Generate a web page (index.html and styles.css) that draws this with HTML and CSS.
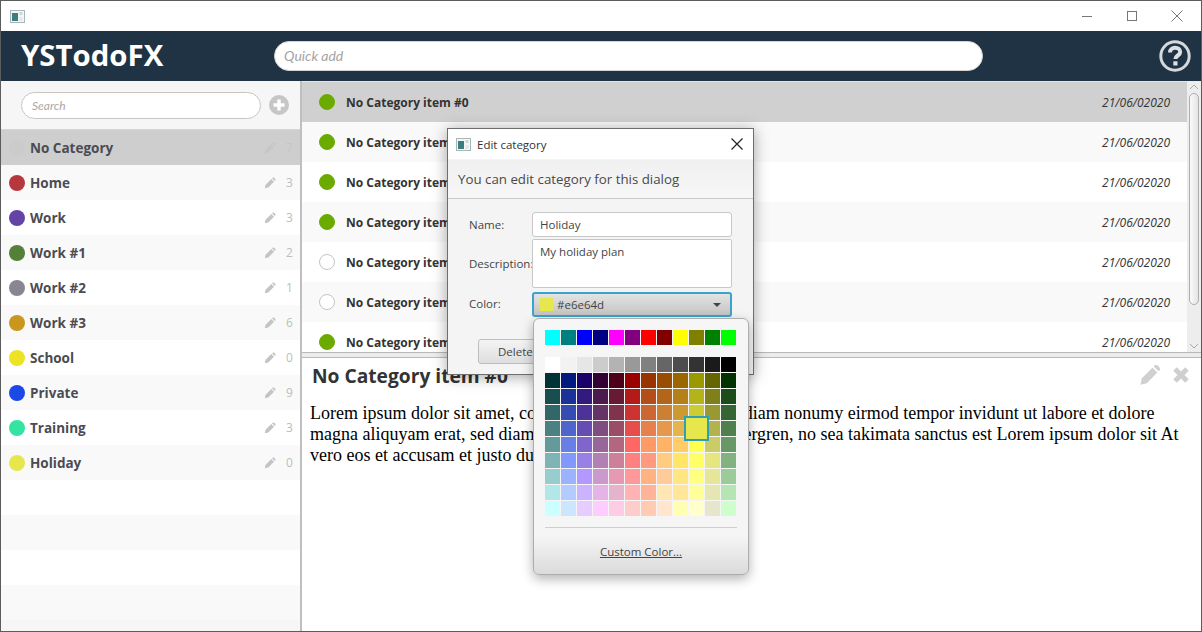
FILE: index.html
```html
<!DOCTYPE html>
<html lang="en">
<head>
<meta charset="utf-8">
<title>YSTodoFX</title>
<link rel="stylesheet" href="styles.css">
</head>
<body>
<svg class="defs" width="0" height="0" aria-hidden="true">
  <symbol id="pencil" viewBox="0 0 24 24"><path d="M1.5 22.5l1.6-7L14.6 4l5.4 5.4L8.5 20.9zM16 2.600l1-1a2.400 2.400 0 0 1 3.300 0l2.100 2.100a2.400 2.400 0 0 1 0 3.300l-1 1z"/></symbol>
  <symbol id="winicon" viewBox="0 0 15 13"><rect x=".5" y=".5" width="14" height="12" fill="#f4f6f6" stroke="#a9b6b6"/><rect x="2" y="3" width="6" height="8" fill="#3c7f80"/><rect x="9.500" y="2" width="3" height="3" fill="#cfd6d6"/><rect x="9.500" y="7" width="3" height="4" fill="#e3e7e7"/></symbol>
</svg>
<div class="window">
  <div class="titlebar">
    <svg class="winicon"><use href="#winicon"/></svg>
    <div class="winctrls">
      <svg width="14" height="14" viewBox="0 0 14 14"><path d="M2 7.500h10" stroke="#777" fill="none"/></svg>
      <svg width="14" height="14" viewBox="0 0 14 14"><rect x="2.500" y="2.500" width="9" height="9" stroke="#777" fill="none"/></svg>
      <svg width="14" height="14" viewBox="0 0 14 14"><path d="M1.500 1.500l11 11M12.500 1.500l-11 11" stroke="#777" fill="none"/></svg>
    </div>
  </div>
  <header class="appbar">
    <h1 class="brand">YSTodoFX</h1>
    <div class="quickadd">Quick add</div>
    <svg class="help" width="34" height="34" viewBox="0 0 34 34"><circle cx="17" cy="17" r="14.200" fill="none" stroke="#d6d9dc" stroke-width="3"/><path d="M12 13.400c0-3 2.300-4.700 5.100-4.700s5.100 1.700 5.100 4.300c0 3.600-4.800 3.400-4.800 7" fill="none" stroke="#dde0e2" stroke-width="4"/><rect x="15.300" y="22.300" width="4.200" height="4.200" fill="#dde0e2"/></svg>
  </header>
  <main class="main">
    <aside class="sidebar">
      <div class="searchrow">
        <div class="search">Search</div>
        <svg class="addbtn" width="20" height="20" viewBox="0 0 20 20"><circle cx="10" cy="10" r="10" fill="#c6c6c6"/><path d="M10 4.500v11M4.500 10h11" stroke="#fff" stroke-width="3.400"/></svg>
      </div>
      <ul class="cats">
        <li class="cat selected"><i class="dot dot-none"></i><span class="catname">No Category</span><svg class="catedit"><use href="#pencil"/></svg><span class="count">7</span></li>
        <li class="cat"><i class="dot dot-home"></i><span class="catname">Home</span><svg class="catedit"><use href="#pencil"/></svg><span class="count">3</span></li>
        <li class="cat"><i class="dot dot-work"></i><span class="catname">Work</span><svg class="catedit"><use href="#pencil"/></svg><span class="count">3</span></li>
        <li class="cat"><i class="dot dot-work1"></i><span class="catname">Work #1</span><svg class="catedit"><use href="#pencil"/></svg><span class="count">2</span></li>
        <li class="cat"><i class="dot dot-work2"></i><span class="catname">Work #2</span><svg class="catedit"><use href="#pencil"/></svg><span class="count">1</span></li>
        <li class="cat"><i class="dot dot-work3"></i><span class="catname">Work #3</span><svg class="catedit"><use href="#pencil"/></svg><span class="count">6</span></li>
        <li class="cat"><i class="dot dot-school"></i><span class="catname">School</span><svg class="catedit"><use href="#pencil"/></svg><span class="count">0</span></li>
        <li class="cat"><i class="dot dot-private"></i><span class="catname">Private</span><svg class="catedit"><use href="#pencil"/></svg><span class="count">9</span></li>
        <li class="cat"><i class="dot dot-training"></i><span class="catname">Training</span><svg class="catedit"><use href="#pencil"/></svg><span class="count">3</span></li>
        <li class="cat"><i class="dot dot-holiday"></i><span class="catname">Holiday</span><svg class="catedit"><use href="#pencil"/></svg><span class="count">0</span></li>
        <li class="cat"></li><li class="cat"></li><li class="cat"></li><li class="cat"></li>
      </ul>
    </aside>
    <section class="content">
      <div class="listpane">
        <ul class="items">
          <li class="item selected"><i class="check done"></i><span class="itemname">No Category item #0</span><span class="date">21/06/02020</span></li>
          <li class="item"><i class="check done"></i><span class="itemname">No Category item #1</span><span class="date">21/06/02020</span></li>
          <li class="item"><i class="check done"></i><span class="itemname">No Category item #2</span><span class="date">21/06/02020</span></li>
          <li class="item"><i class="check done"></i><span class="itemname">No Category item #3</span><span class="date">21/06/02020</span></li>
          <li class="item"><i class="check"></i><span class="itemname">No Category item #4</span><span class="date">21/06/02020</span></li>
          <li class="item"><i class="check"></i><span class="itemname">No Category item #5</span><span class="date">21/06/02020</span></li>
          <li class="item"><i class="check done"></i><span class="itemname">No Category item #6</span><span class="date">21/06/02020</span></li>
        </ul>
        <div class="scrollbar">
          <svg class="arrow" width="14" height="12" viewBox="0 0 14 12"><path d="M3 8l4-4 4 4" fill="none" stroke="#a8a8a8"/></svg>
          <div class="thumbtrack"><div class="thumb"></div></div>
          <svg class="arrow" width="14" height="12" viewBox="0 0 14 12"><path d="M3 4l4 4 4-4" fill="none" stroke="#a8a8a8"/></svg>
        </div>
      </div>
      <div class="splitter"></div>
      <article class="details">
        <div class="dethead">
          <h2 class="dettitle">No Category item #0</h2>
          <svg class="detedit"><use href="#pencil"/></svg>
          <svg class="detclose" width="18" height="18" viewBox="0 0 18 18"><path d="M3 3l12 12M15 3L3 15" stroke="#cfcfcf" stroke-width="5"/></svg>
        </div>
        <p class="detbody">Lorem ipsum dolor sit amet, consetetur sadipscing elitr, sed diam nonumy eirmod tempor invidunt ut labore et dolore magna aliquyam erat, sed diam voluptua. Stet clita kasd gubergren, no sea takimata sanctus est Lorem ipsum dolor sit At vero eos et accusam et justo duo dolores et ea rebum.</p>
      </article>
    </section>
  </main>
</div>

<div class="dialog">
  <div class="dlgtitle">
    <svg class="winicon"><use href="#winicon"/></svg>
    <span class="dlgcaption">Edit category</span>
    <svg class="dlgclose" width="14" height="14" viewBox="0 0 14 14"><path d="M1.500 1.500l11 11M12.500 1.500l-11 11" stroke="#222" fill="none" stroke-width="1.200"/></svg>
  </div>
  <div class="dlghead">You can edit category for this dialog</div>
  <div class="form">
    <label class="flabel">Name:</label>
    <div class="finput">Holiday</div>
    <label class="flabel">Description:</label>
    <div class="farea">My holiday plan</div>
    <label class="flabel">Color:</label>
    <div class="fcombo"><i class="swatchmini"></i><span class="combotext">#e6e64d</span><i class="caret"></i></div>
  </div>
  <div class="dlgbtns"><button class="btn">Delete</button></div>
</div>

<div class="palette">
  <div class="pgrid">
    <span style="background:#00ffff"></span><span style="background:#008080"></span><span style="background:#0000ff"></span><span style="background:#000080"></span><span style="background:#ff00ff"></span><span style="background:#800080"></span><span style="background:#ff0000"></span><span style="background:#800000"></span><span style="background:#ffff00"></span><span style="background:#808000"></span><span style="background:#008000"></span><span style="background:#00ff00"></span>
  </div>
  <div class="pgrid pgrid-main">
    <span style="background:#ffffff"></span><span style="background:#f2f2f2"></span><span style="background:#e6e6e6"></span><span style="background:#cccccc"></span><span style="background:#b3b3b3"></span><span style="background:#999999"></span><span style="background:#808080"></span><span style="background:#666666"></span><span style="background:#4d4d4d"></span><span style="background:#333333"></span><span style="background:#1a1a1a"></span><span style="background:#000000"></span>
    <span style="background:#003333"></span><span style="background:#001a80"></span><span style="background:#1a0068"></span><span style="background:#330033"></span><span style="background:#4d001a"></span><span style="background:#990000"></span><span style="background:#993300"></span><span style="background:#994d00"></span><span style="background:#996600"></span><span style="background:#999900"></span><span style="background:#666600"></span><span style="background:#003300"></span>
    <span style="background:#1a4d4d"></span><span style="background:#1a3399"></span><span style="background:#331a80"></span><span style="background:#4d1a4d"></span><span style="background:#661a33"></span><span style="background:#b31a1a"></span><span style="background:#b34d1a"></span><span style="background:#b3661a"></span><span style="background:#b3801a"></span><span style="background:#b3b31a"></span><span style="background:#80801a"></span><span style="background:#1a4d1a"></span>
    <span style="background:#336666"></span><span style="background:#334db3"></span><span style="background:#4d3399"></span><span style="background:#663366"></span><span style="background:#80334d"></span><span style="background:#cc3333"></span><span style="background:#cc6633"></span><span style="background:#cc8033"></span><span style="background:#cc9933"></span><span style="background:#cccc33"></span><span style="background:#999933"></span><span style="background:#336633"></span>
    <span style="background:#4d8080"></span><span style="background:#4d66cc"></span><span style="background:#664db3"></span><span style="background:#804d80"></span><span style="background:#994d66"></span><span style="background:#e64d4d"></span><span style="background:#e6804d"></span><span style="background:#e6994d"></span><span style="background:#e6b34d"></span><span class="picked" style="background:#e6e64d"></span><span style="background:#b3b34d"></span><span style="background:#4d804d"></span>
    <span style="background:#669999"></span><span style="background:#6680e6"></span><span style="background:#8066cc"></span><span style="background:#996699"></span><span style="background:#b36680"></span><span style="background:#ff6666"></span><span style="background:#ff9966"></span><span style="background:#ffb366"></span><span style="background:#ffcc66"></span><span style="background:#ffff4d"></span><span style="background:#cccc66"></span><span style="background:#669966"></span>
    <span style="background:#80b3b3"></span><span style="background:#8099ff"></span><span style="background:#9980e6"></span><span style="background:#b380b3"></span><span style="background:#cc8099"></span><span style="background:#ff8080"></span><span style="background:#ff9980"></span><span style="background:#ffcc80"></span><span style="background:#ffe666"></span><span style="background:#ffff66"></span><span style="background:#e6e680"></span><span style="background:#80b380"></span>
    <span style="background:#99cccc"></span><span style="background:#99b3ff"></span><span style="background:#b399ff"></span><span style="background:#cc99cc"></span><span style="background:#e699b3"></span><span style="background:#ff9999"></span><span style="background:#ffb380"></span><span style="background:#ffcc99"></span><span style="background:#ffe680"></span><span style="background:#ffff80"></span><span style="background:#e6e699"></span><span style="background:#99cc99"></span>
    <span style="background:#b3e6e6"></span><span style="background:#b3ccff"></span><span style="background:#ccb3ff"></span><span style="background:#e6b3e6"></span><span style="background:#e6b3cc"></span><span style="background:#ffb3b3"></span><span style="background:#ffb399"></span><span style="background:#ffe6b3"></span><span style="background:#ffe699"></span><span style="background:#ffff99"></span><span style="background:#e6e6b3"></span><span style="background:#b3e6b3"></span>
    <span style="background:#ccffff"></span><span style="background:#cce6ff"></span><span style="background:#e6ccff"></span><span style="background:#ffccff"></span><span style="background:#ffcce6"></span><span style="background:#ffcccc"></span><span style="background:#ffccb3"></span><span style="background:#ffe6cc"></span><span style="background:#ffffb3"></span><span style="background:#ffffcc"></span><span style="background:#e6e6cc"></span><span style="background:#ccffcc"></span>
  </div>
  <div class="psep"></div>
  <div class="custom">Custom Color...</div>
</div>
</body>
</html>
```
FILE: styles.css
```css
* { box-sizing: border-box; }
html, body { margin: 0; padding: 0; height: 100%; overflow: hidden; background: #fff; }
body { font-family: "Open Sans", "Noto Sans", sans-serif; color: #333; }
ul { list-style: none; margin: 0; padding: 0; }
.defs { position: absolute; }

.window { width: 1202px; height: 632px; border: 1px solid #5c5c5c; display: flex; flex-direction: column; }

.titlebar { height: 30px; flex: none; background: #fff; display: flex; align-items: center; justify-content: space-between; padding: 0 17px 0 9px; }
.winicon { width: 15px; height: 13px; display: block; flex: none; }
.winctrls { display: flex; gap: 31px; }
.winctrls svg { display: block; }

.appbar { height: 50px; flex: none; background: #1f3344; display: flex; align-items: center; padding: 0 9px 0 20px; }
.brand { margin: 0; width: 253px; flex: none; font-size: 29.4px; font-weight: 700; color: #fff; line-height: 1; }
.quickadd { width: 709px; height: 30px; border-radius: 15px; background: #fff; border: 1px solid #d2d2d2; padding-left: 9px; font-size: 14px; font-style: italic; line-height: 28px; color: #a3a3a3; font-family: "Lato", sans-serif; }
.help { margin-left: auto; display: block; }

.main { flex: 1; min-height: 0; display: flex; }

.sidebar { width: 301px; flex: none; background: #f6f6f6; border-right: 2px solid #bfbfbf; overflow: hidden; }
.searchrow { height: 49px; display: flex; align-items: center; padding: 0 11px 0 20px; gap: 8px; border-bottom: 1px solid #d6d6d6; }
.search { width: 240px; height: 27px; border-radius: 14px; border: 1px solid #c9c6c2; background: #fff; padding-left: 10px; font-family: "Lato", sans-serif; font-size: 12px; font-style: italic; line-height: 25px; color: #a8a8a8; }
.addbtn { display: block; flex: none; }
.cats { background: #fff; }
.cat { height: 35px; display: flex; align-items: center; padding: 0 5px 0 8px; background: #fff; }
.cat:nth-child(even) { background: #f9f9f9; }
.cat.selected { background: #cecece; }
.dot { width: 16px; height: 16px; border-radius: 50%; flex: none; margin-right: 5px; }
.dot-none { background: #cbcbcb; }
.dot-home { background: #b7383c; }
.dot-work { background: #6344a6; }
.dot-work1 { background: #55803a; }
.dot-work2 { background: #8a8592; }
.dot-work3 { background: #c9961e; }
.dot-school { background: #ece324; }
.dot-private { background: #1a49e8; }
.dot-training { background: #35e3a3; }
.dot-holiday { background: #e6e64d; }
.catname { flex: 1; font-size: 13.5px; font-weight: 700; color: #4b4b52; }
.catedit { width: 12px; height: 12px; fill: #c4c4c4; margin-right: 8px; flex: none; }
.count { width: 11px; font-size: 12px; color: #bdbdbd; text-align: center; flex: none; }
.selected .catedit { fill: #c6c6c6; }
.selected .count { color: #c6c6c6; }

.content { flex: 1; min-width: 0; display: flex; flex-direction: column; }
.listpane { height: 271px; flex: none; display: flex; background: #fff; overflow: hidden; }
.items { flex: 1; min-width: 0; padding-top: 1px; background: #e4e4e4; }
.item { height: 40px; display: flex; align-items: center; padding: 0 17px 0 17px; background: #fff; }
.item:nth-child(even) { background: #f9f9f9; }
.item.selected { background: #d0d0d0; }
.check { width: 16px; height: 16px; border-radius: 50%; flex: none; margin-right: 11px; background: #fff; border: 1px solid #c4c4c4; }
.check.done { background: #6bab00; border-color: #6bab00; }
.itemname { flex: 1; font-size: 12px; font-weight: 700; color: #333; }
.date { font-size: 12px; font-style: italic; color: #333; }

.scrollbar { width: 14px; flex: none; background: #ededed; display: flex; flex-direction: column; }
.arrow { display: block; flex: none; }
.thumbtrack { flex: 1; min-height: 0; padding: 0 2px; }
.thumb { height: 212px; border: 1px solid #aeaeae; border-radius: 5px; background: linear-gradient(90deg, #fafafa, #e4e4e4); }

.splitter { height: 6px; flex: none; background: #ececec; border-top: 1px solid #b9b9b9; border-bottom: 1px solid #b9b9b9; }

.details { flex: 1; min-height: 0; background: #fff; padding: 3px 11px 0 8px; overflow: hidden; }
.dethead { display: flex; align-items: center; height: 28px; padding-left: 2px; }
.dettitle { margin: 0; flex: 1; padding-top: 2px; font-size: 19.2px; font-weight: 700; color: #333; line-height: 1; }
.detedit { width: 22px; height: 22px; fill: #d0d0d0; margin-right: 11px; margin-left: -2px; }
.detclose { display: block; }
.detbody { margin: 14px 0 0; font-family: "Liberation Serif", serif; font-size: 18px; line-height: 21px; color: #000; }

.dialog { position: absolute; left: 447px; top: 128px; width: 307px; height: 247px; background: #f4f4f4; border: 1px solid #6e6e6e; box-shadow: 0 2px 14px rgba(0,0,0,.35); overflow: hidden; }
.dlgtitle { height: 30px; margin-bottom: 1px; background: #fff; display: flex; align-items: center; padding: 0 9px 0 8px; }
.dlgcaption { font-size: 11.5px; color: #333; margin-left: 6px; flex: 1; }
.dlgclose { display: block; }
.dlghead { height: 39px; padding-left: 10px; font-size: 13.3px; line-height: 38px; color: #4a4a4a; background: linear-gradient(#f0f0f0, #f7f7f7); border-bottom: 1px solid #c9c9c9; }
.form { display: grid; grid-template-columns: 63px 200px; grid-template-rows: 25px 49px 27px; gap: 2px 0; align-items: center; padding: 13px 0 0 21px; }
.flabel { font-size: 11.5px; color: #444; white-space: nowrap; }
.finput, .farea { background: #fff; border: 1px solid #c8c8c8; border-radius: 3px; font-size: 11.5px; color: #444; padding-left: 7px; }
.finput { height: 25px; line-height: 23px; }
.farea { height: 49px; line-height: 23px; border-radius: 2px; }
.fcombo { height: 25px; align-self: end; display: flex; align-items: center; padding: 0 9px 0 6px; border: 2px solid #3aa3cc; border-radius: 3px; background: linear-gradient(#e3e3e3, #c4c4c4); font-size: 11.5px; color: #444; }
.swatchmini { width: 13px; height: 13px; background: #e6e64d; margin-right: 4px; flex: none; }
.combotext { flex: 1; }
.caret { width: 0; height: 0; border-left: 4px solid transparent; border-right: 4px solid transparent; border-top: 4px solid #444; }
.dlgbtns { padding: 22px 0 0 30px; }
.btn { width: 200px; height: 25px; border: 1px solid #bdbdbd; border-radius: 3px; background: linear-gradient(#f4f4f4, #dedede); font-family: inherit; font-size: 11.5px; color: #444; text-align: left; padding: 0 0 0 19px; }

.palette { position: absolute; left: 533px; top: 318px; width: 216px; height: 257px; background: linear-gradient(#f6f6f6 0, #f5f5f5 85%, #dbdbdb 100%); border: 1px solid #adadad; border-radius: 6px; box-shadow: 0 4px 12px rgba(0,0,0,.3); padding: 11px 11px 0 11px; }
.pgrid { display: grid; grid-template-columns: repeat(12, 15px); grid-auto-rows: 15px; gap: 1px; }
.pgrid-main { margin-top: 12px; }
.pgrid .picked { position: relative; z-index: 1; margin: -5px; border: 1px solid #2f9fb5; outline: 1px solid #2f9fb5; outline-offset: -2px; }
.psep { height: 1px; background: #cfcfcf; margin: 11px 0 0; }
.custom { margin-top: 16px; text-align: center; font-size: 11.5px; color: #444; text-decoration: underline; }
```
